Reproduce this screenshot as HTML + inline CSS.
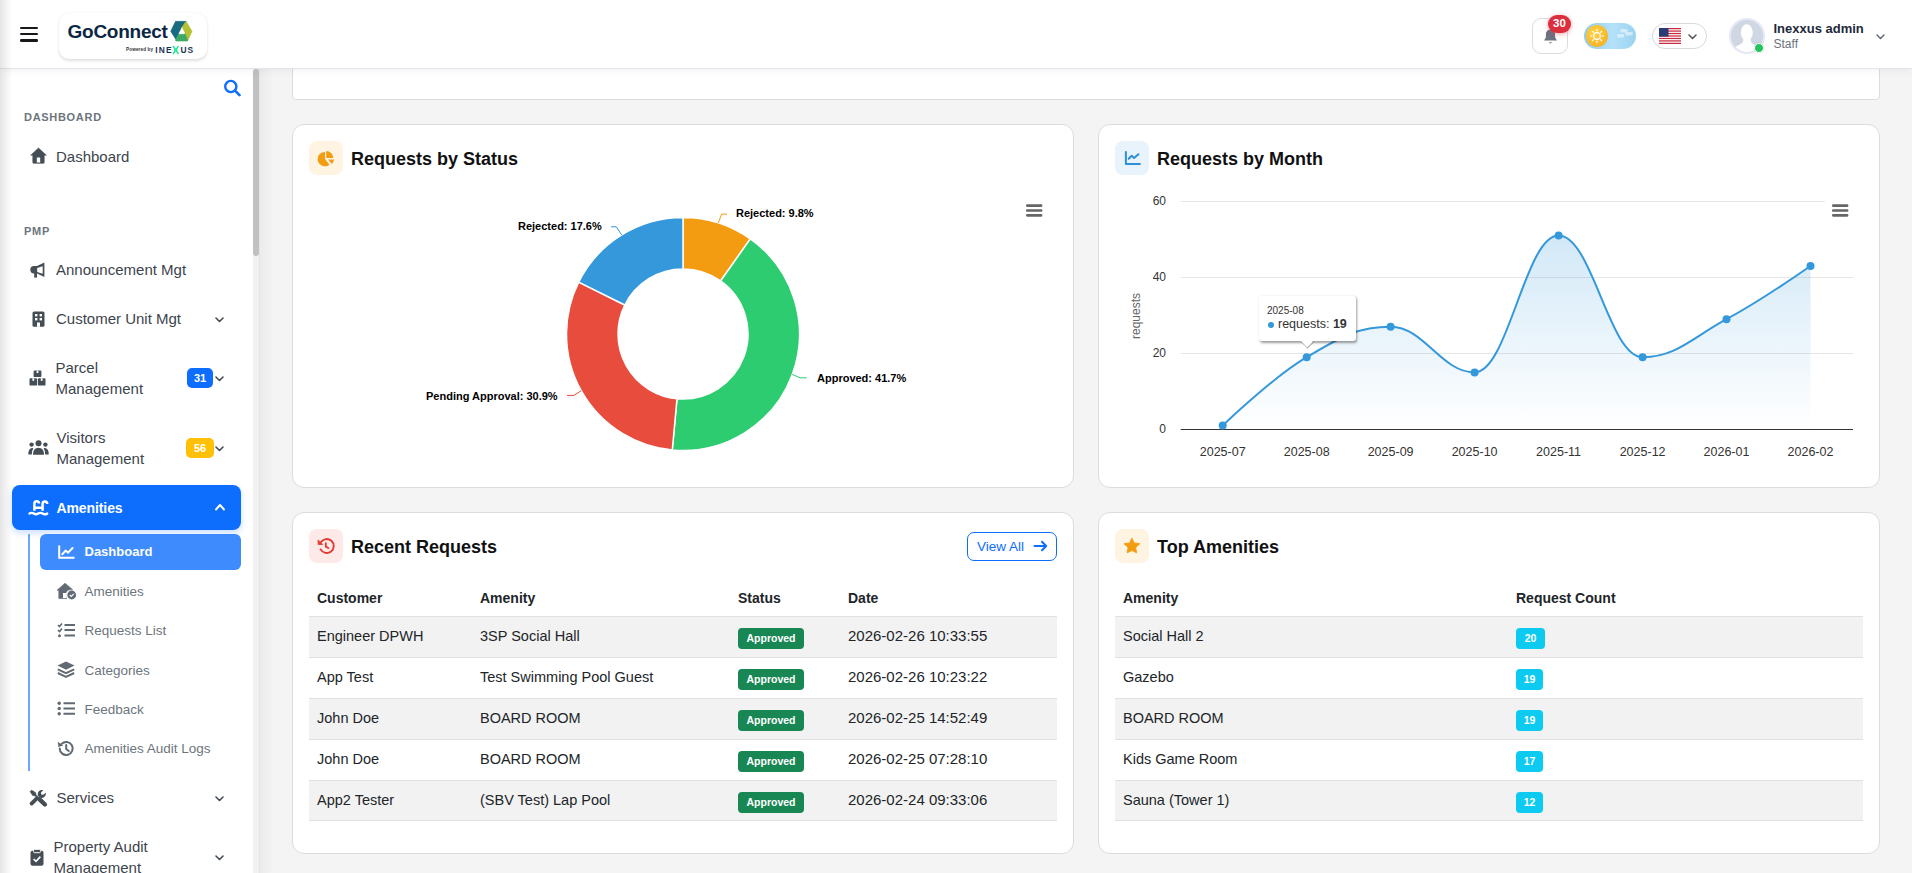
<!DOCTYPE html>
<html><head><meta charset="utf-8"><title>GoConnect - Amenities Dashboard</title>
<style>
html,body{margin:0;padding:0;width:1912px;height:873px;overflow:hidden;background:#f4f4f4}
body{font-family:"Liberation Sans", sans-serif;position:relative}
.t{position:absolute;white-space:nowrap}
.b{position:absolute}
</style></head><body>
<div class="b" style="left:260px;top:68px;width:1652px;height:805px;background:#f4f4f4"></div>
<div class="b" style="left:260px;top:68px;width:14px;height:805px;background:linear-gradient(90deg,rgba(0,0,0,0.035),rgba(0,0,0,0))"></div>
<div class="b" style="left:292px;top:40px;width:1588px;height:60px;background:#fff;border:1px solid #dcdcdc;box-sizing:border-box;border-radius:4px"></div>
<div class="b" style="left:292px;top:124px;width:782px;height:364px;background:#fff;border:1px solid #dcdcdc;box-sizing:border-box;border-radius:12px"></div>
<div class="b" style="left:1098px;top:124px;width:782px;height:364px;background:#fff;border:1px solid #dcdcdc;box-sizing:border-box;border-radius:12px"></div>
<div class="b" style="left:292px;top:512px;width:782px;height:342px;background:#fff;border:1px solid #dcdcdc;box-sizing:border-box;border-radius:12px"></div>
<div class="b" style="left:1098px;top:512px;width:782px;height:342px;background:#fff;border:1px solid #dcdcdc;box-sizing:border-box;border-radius:12px"></div>
<div class="b" style="left:309px;top:141px;width:34px;height:34px;background:#fff3e2;border-radius:8px"></div>

<div class="t" style="left:351px;top:149.76px;font-size:18px;line-height:18px;font-weight:700;color:#111;">Requests by Status</div>
<svg class="b" style="left:309px;top:141px" width="34" height="34" viewBox="0 0 34 34"><path d="M16 10.9 A7.2 7.2 0 1 0 20.4 23.7 L16 18.1 Z" fill="#f39c12"/><path d="M17.2 10.1 A7.1 7.1 0 0 1 24.3 16.9 L17.2 16.9 Z" fill="#f39c12"/><path d="M19.2 18.4 L25 18.4 A7.3 7.3 0 0 1 22.7 23.1 Z" fill="#f39c12"/></svg>
<div class="b" style="left:1115px;top:141px;width:34px;height:34px;background:#e8f3fc;border-radius:8px"></div>

<div class="t" style="left:1157px;top:149.76px;font-size:18px;line-height:18px;font-weight:700;color:#111;">Requests by Month</div>
<svg class="b" style="left:1115px;top:141px" width="34" height="34" viewBox="0 0 34 34"><path d="M10.9 10.9 V22.9 H24.9" fill="none" stroke="#2d8fd8" stroke-width="2" stroke-linecap="round" stroke-linejoin="round"/><path d="M13.7 17.8 L16.7 14.8 L19.1 17 L23.4 13.2" fill="none" stroke="#2d8fd8" stroke-width="2" stroke-linejoin="round" stroke-linecap="round"/></svg>
<div class="b" style="left:309px;top:529px;width:34px;height:34px;background:#fde9e8;border-radius:8px"></div>

<div class="t" style="left:351px;top:537.76px;font-size:18px;line-height:18px;font-weight:700;color:#111;">Recent Requests</div>
<svg class="b" style="left:309px;top:529px" width="34" height="34" viewBox="0 0 34 34"><path d="M11.6 20.4 A7 7 0 1 0 11.8 13.3" fill="none" stroke="#e03c31" stroke-width="1.9" stroke-linecap="round"/><path d="M9 10.9 L9.2 15.6 L13.8 15.4 Z" fill="#e03c31" stroke="#e03c31" stroke-width="0.8" stroke-linejoin="round"/><path d="M16.8 14.2 V17.6 L19.4 19" fill="none" stroke="#e03c31" stroke-width="1.8" stroke-linecap="round"/></svg>
<div class="b" style="left:1115px;top:529px;width:34px;height:34px;background:#fff3e2;border-radius:8px"></div>

<div class="t" style="left:1157px;top:537.76px;font-size:18px;line-height:18px;font-weight:700;color:#111;">Top Amenities</div>
<svg class="b" style="left:1115px;top:529px" width="34" height="34" viewBox="0 0 34 34"><path d="M16.9 9.1 L19.1 13.9 L24.8 14.7 L20.7 18.6 L21.6 23.8 L16.9 21.6 L12.2 23.8 L13.1 18.6 L9 14.7 L14.7 13.9 Z" fill="#f39c12" stroke="#f39c12" stroke-width="0.9" stroke-linejoin="round"/></svg>
<svg class="b" style="left:1025px;top:203px;" width="20" height="16" viewBox="0 0 20 16"><rect x="1" y="1.3" width="16.4" height="2.6" rx="1.1" fill="#666"/><rect x="1" y="6.2" width="16.4" height="2.6" rx="1.1" fill="#666"/><rect x="1" y="11.1" width="16.4" height="2.6" rx="1.1" fill="#666"/></svg>
<svg class="b" style="left:1831px;top:203px;" width="20" height="16" viewBox="0 0 20 16"><rect x="1" y="1.3" width="16.4" height="2.6" rx="1.1" fill="#666"/><rect x="1" y="6.2" width="16.4" height="2.6" rx="1.1" fill="#666"/><rect x="1" y="11.1" width="16.4" height="2.6" rx="1.1" fill="#666"/></svg>
<svg class="b" style="left:0px;top:0px;pointer-events:none" width="1912" height="873" viewBox="0 0 1912 873"><path d="M683.00 217.50 A116.5 116.5 0 0 1 750.31 238.91 L720.56 280.95 A65.0 65.0 0 0 0 683.00 269.00 Z" fill="#f39c12" stroke="#fff" stroke-width="1.5" stroke-linejoin="round"/><path d="M750.31 238.91 A116.5 116.5 0 0 1 672.25 450.00 L677.00 398.72 A65.0 65.0 0 0 0 720.56 280.95 Z" fill="#2ecc71" stroke="#fff" stroke-width="1.5" stroke-linejoin="round"/><path d="M672.25 450.00 A116.5 116.5 0 0 1 578.71 282.07 L624.81 305.03 A65.0 65.0 0 0 0 677.00 398.72 Z" fill="#e74c3c" stroke="#fff" stroke-width="1.5" stroke-linejoin="round"/><path d="M578.71 282.07 A116.5 116.5 0 0 1 683.00 217.50 L683.00 269.00 A65.0 65.0 0 0 0 624.81 305.03 Z" fill="#3498db" stroke="#fff" stroke-width="1.5" stroke-linejoin="round"/><path d="M718.3 223 L721.6 214.2 L727 214.2" fill="none" stroke="#f39c12" stroke-width="1"/><path d="M621.7 235 L616.3 226.8 L611 226.8" fill="none" stroke="#3498db" stroke-width="1"/><path d="M792.3 374.4 L800 377.8 L806.5 377.8" fill="none" stroke="#2ecc71" stroke-width="1"/><path d="M581.2 390.7 L574 395.4 L567 395.4" fill="none" stroke="#e74c3c" stroke-width="1"/></svg>
<div class="t" style="left:736px;top:207.69px;font-size:11px;line-height:11px;font-weight:700;color:#000;text-shadow:0 0 2px #fff,0 0 2px #fff;white-space:nowrap">Rejected: 9.8%</div>
<div class="t" style="left:518px;top:220.69px;font-size:11px;line-height:11px;font-weight:700;color:#000;text-shadow:0 0 2px #fff,0 0 2px #fff;white-space:nowrap">Rejected: 17.6%</div>
<div class="t" style="left:817px;top:372.69px;font-size:11px;line-height:11px;font-weight:700;color:#000;text-shadow:0 0 2px #fff,0 0 2px #fff;white-space:nowrap">Approved: 41.7%</div>
<div class="t" style="left:426px;top:390.69px;font-size:11px;line-height:11px;font-weight:700;color:#000;text-shadow:0 0 2px #fff,0 0 2px #fff;white-space:nowrap">Pending Approval: 30.9%</div>
<svg class="b" style="left:0px;top:0px;pointer-events:none" width="1912" height="873" viewBox="0 0 1912 873"><defs><linearGradient id="ag" x1="0" y1="0" x2="0" y2="1"><stop offset="0" stop-color="#3498db" stop-opacity="0.22"/><stop offset="1" stop-color="#3498db" stop-opacity="0"/></linearGradient></defs><path d="M1180.7 353.5 H1853" stroke="#e6e6e6" stroke-width="1"/><path d="M1180.7 277.5 H1853" stroke="#e6e6e6" stroke-width="1"/><path d="M1180.7 201.5 H1825" stroke="#e6e6e6" stroke-width="1"/><path d="M 1222.7 425.6 C 1222.7 425.6 1273.1 377.0 1306.7 357.2 C 1340.3 337.4 1357.0 326.8 1390.6 326.8 C 1424.2 326.8 1441.0 372.4 1474.6 372.4 C 1508.2 372.4 1525.0 235.6 1558.6 235.6 C 1592.2 235.6 1609.0 357.2 1642.6 357.2 C 1676.2 357.2 1692.9 337.4 1726.5 319.2 C 1760.1 301.0 1810.5 266.0 1810.5 266.0 L 1810.5 429.4 L 1222.7 429.4 Z" fill="url(#ag)"/><path d="M 1222.7 425.6 C 1222.7 425.6 1273.1 377.0 1306.7 357.2 C 1340.3 337.4 1357.0 326.8 1390.6 326.8 C 1424.2 326.8 1441.0 372.4 1474.6 372.4 C 1508.2 372.4 1525.0 235.6 1558.6 235.6 C 1592.2 235.6 1609.0 357.2 1642.6 357.2 C 1676.2 357.2 1692.9 337.4 1726.5 319.2 C 1760.1 301.0 1810.5 266.0 1810.5 266.0" fill="none" stroke="#3498db" stroke-width="2"/><path d="M1180.7 429.5 H1853" stroke="#333" stroke-width="1"/><circle cx="1222.7" cy="425.6" r="4" fill="#3498db"/><circle cx="1306.7" cy="357.2" r="4" fill="#3498db"/><circle cx="1390.6" cy="326.8" r="4" fill="#3498db"/><circle cx="1474.6" cy="372.4" r="4" fill="#3498db"/><circle cx="1558.6" cy="235.6" r="4" fill="#3498db"/><circle cx="1642.6" cy="357.2" r="4" fill="#3498db"/><circle cx="1726.5" cy="319.2" r="4" fill="#3498db"/><circle cx="1810.5" cy="266.0" r="4" fill="#3498db"/></svg>
<div class="t" style="left:1100px;width:66px;text-align:right;top:423.2px;font-size:12px;line-height:12px;color:#333">0</div>
<div class="t" style="left:1100px;width:66px;text-align:right;top:347.2px;font-size:12px;line-height:12px;color:#333">20</div>
<div class="t" style="left:1100px;width:66px;text-align:right;top:271.2px;font-size:12px;line-height:12px;color:#333">40</div>
<div class="t" style="left:1100px;width:66px;text-align:right;top:195.2px;font-size:12px;line-height:12px;color:#333">60</div>
<div class="t" style="left:1182.7px;width:80px;text-align:center;top:446.4px;font-size:12.5px;line-height:12.5px;color:#333">2025-07</div>
<div class="t" style="left:1266.7px;width:80px;text-align:center;top:446.4px;font-size:12.5px;line-height:12.5px;color:#333">2025-08</div>
<div class="t" style="left:1350.6px;width:80px;text-align:center;top:446.4px;font-size:12.5px;line-height:12.5px;color:#333">2025-09</div>
<div class="t" style="left:1434.6px;width:80px;text-align:center;top:446.4px;font-size:12.5px;line-height:12.5px;color:#333">2025-10</div>
<div class="t" style="left:1518.6px;width:80px;text-align:center;top:446.4px;font-size:12.5px;line-height:12.5px;color:#333">2025-11</div>
<div class="t" style="left:1602.6px;width:80px;text-align:center;top:446.4px;font-size:12.5px;line-height:12.5px;color:#333">2025-12</div>
<div class="t" style="left:1686.5px;width:80px;text-align:center;top:446.4px;font-size:12.5px;line-height:12.5px;color:#333">2026-01</div>
<div class="t" style="left:1770.5px;width:80px;text-align:center;top:446.4px;font-size:12.5px;line-height:12.5px;color:#333">2026-02</div>
<div class="t" style="left:1113px;top:310px;width:46px;font-size:12px;line-height:12px;color:#666;transform:rotate(-90deg);transform-origin:23px 6px;text-align:center">requests</div>
<div class="b" style="left:1259px;top:296px;width:97px;height:45px;background:#fff;border-radius:3px;box-shadow:1px 1.5px 2.5px rgba(0,0,0,0.38)"></div>
<svg class="b" style="left:1294px;top:338px;" width="26" height="14" viewBox="0 0 26 14"><path d="M6.5 2.5 L12.8 9 L19 2.5" fill="#fff" stroke="rgba(0,0,0,0.3)" stroke-width="1.2" transform="translate(0.8,1)"/><path d="M6.5 2.5 L12.8 9 L19 2.5 Z" fill="#fff"/><rect x="0" y="0" width="26" height="3" fill="#fff"/></svg>
<div class="t" style="left:1267px;top:306.04px;font-size:10px;line-height:10px;font-weight:400;color:#333;">2025-08</div>
<div class="b" style="left:1268px;top:321.5px;width:6px;height:6px;border-radius:3px;background:#3498db"></div>
<div class="t" style="left:1278px;top:318.42px;font-size:12.5px;line-height:12.5px;font-weight:400;color:#333;">requests: <b>19</b></div>
<div class="t" style="left:317px;top:591.15px;font-size:14px;line-height:14px;font-weight:700;color:#212529;">Customer</div>
<div class="t" style="left:480px;top:591.15px;font-size:14px;line-height:14px;font-weight:700;color:#212529;">Amenity</div>
<div class="t" style="left:738px;top:591.15px;font-size:14px;line-height:14px;font-weight:700;color:#212529;">Status</div>
<div class="t" style="left:848px;top:591.15px;font-size:14px;line-height:14px;font-weight:700;color:#212529;">Date</div>
<div class="b" style="left:309px;top:616px;width:748px;height:1px;background:#dee2e6"></div>
<div class="b" style="left:309px;top:617px;width:748px;height:40px;background:#f2f2f2"></div>
<div class="b" style="left:309px;top:657px;width:748px;height:1px;background:#dee2e6"></div>
<div class="t" style="left:317px;top:628.73px;font-size:14.5px;line-height:14.5px;font-weight:400;color:#212529;">Engineer DPWH</div>
<div class="t" style="left:480px;top:628.73px;font-size:14.5px;line-height:14.5px;font-weight:400;color:#212529;">3SP Social Hall</div>
<div class="b" style="left:738px;top:627.5px;width:66px;height:21px;background:#198754;border-radius:4px"></div>
<div class="t" style="left:738px;width:66px;text-align:center;top:632.71px;font-size:10.5px;line-height:10.5px;font-weight:700;color:#fff">Approved</div>
<div class="t" style="left:848px;top:628.30px;font-size:15px;line-height:15px;font-weight:400;color:#212529;">2026-02-26 10:33:55</div>
<div class="b" style="left:309px;top:698px;width:748px;height:1px;background:#dee2e6"></div>
<div class="t" style="left:317px;top:669.73px;font-size:14.5px;line-height:14.5px;font-weight:400;color:#212529;">App Test</div>
<div class="t" style="left:480px;top:669.73px;font-size:14.5px;line-height:14.5px;font-weight:400;color:#212529;">Test Swimming Pool Guest</div>
<div class="b" style="left:738px;top:668.5px;width:66px;height:21px;background:#198754;border-radius:4px"></div>
<div class="t" style="left:738px;width:66px;text-align:center;top:673.71px;font-size:10.5px;line-height:10.5px;font-weight:700;color:#fff">Approved</div>
<div class="t" style="left:848px;top:669.30px;font-size:15px;line-height:15px;font-weight:400;color:#212529;">2026-02-26 10:23:22</div>
<div class="b" style="left:309px;top:699px;width:748px;height:40px;background:#f2f2f2"></div>
<div class="b" style="left:309px;top:739px;width:748px;height:1px;background:#dee2e6"></div>
<div class="t" style="left:317px;top:710.73px;font-size:14.5px;line-height:14.5px;font-weight:400;color:#212529;">John Doe</div>
<div class="t" style="left:480px;top:710.73px;font-size:14.5px;line-height:14.5px;font-weight:400;color:#212529;">BOARD ROOM</div>
<div class="b" style="left:738px;top:709.5px;width:66px;height:21px;background:#198754;border-radius:4px"></div>
<div class="t" style="left:738px;width:66px;text-align:center;top:714.71px;font-size:10.5px;line-height:10.5px;font-weight:700;color:#fff">Approved</div>
<div class="t" style="left:848px;top:710.30px;font-size:15px;line-height:15px;font-weight:400;color:#212529;">2026-02-25 14:52:49</div>
<div class="b" style="left:309px;top:780px;width:748px;height:1px;background:#dee2e6"></div>
<div class="t" style="left:317px;top:751.73px;font-size:14.5px;line-height:14.5px;font-weight:400;color:#212529;">John Doe</div>
<div class="t" style="left:480px;top:751.73px;font-size:14.5px;line-height:14.5px;font-weight:400;color:#212529;">BOARD ROOM</div>
<div class="b" style="left:738px;top:750.5px;width:66px;height:21px;background:#198754;border-radius:4px"></div>
<div class="t" style="left:738px;width:66px;text-align:center;top:755.71px;font-size:10.5px;line-height:10.5px;font-weight:700;color:#fff">Approved</div>
<div class="t" style="left:848px;top:751.30px;font-size:15px;line-height:15px;font-weight:400;color:#212529;">2026-02-25 07:28:10</div>
<div class="b" style="left:309px;top:781px;width:748px;height:39px;background:#f2f2f2"></div>
<div class="b" style="left:309px;top:820px;width:748px;height:1px;background:#dee2e6"></div>
<div class="t" style="left:317px;top:792.73px;font-size:14.5px;line-height:14.5px;font-weight:400;color:#212529;">App2 Tester</div>
<div class="t" style="left:480px;top:792.73px;font-size:14.5px;line-height:14.5px;font-weight:400;color:#212529;">(SBV Test) Lap Pool</div>
<div class="b" style="left:738px;top:791.5px;width:66px;height:21px;background:#198754;border-radius:4px"></div>
<div class="t" style="left:738px;width:66px;text-align:center;top:796.71px;font-size:10.5px;line-height:10.5px;font-weight:700;color:#fff">Approved</div>
<div class="t" style="left:848px;top:792.30px;font-size:15px;line-height:15px;font-weight:400;color:#212529;">2026-02-24 09:33:06</div>
<div class="t" style="left:1123px;top:591.15px;font-size:14px;line-height:14px;font-weight:700;color:#212529;">Amenity</div>
<div class="t" style="left:1516px;top:591.15px;font-size:14px;line-height:14px;font-weight:700;color:#212529;">Request Count</div>
<div class="b" style="left:1115px;top:616px;width:748px;height:1px;background:#dee2e6"></div>
<div class="b" style="left:1115px;top:617px;width:748px;height:40px;background:#f2f2f2"></div>
<div class="b" style="left:1115px;top:657px;width:748px;height:1px;background:#dee2e6"></div>
<div class="t" style="left:1123px;top:628.73px;font-size:14.5px;line-height:14.5px;font-weight:400;color:#212529;">Social Hall 2</div>
<div class="b" style="left:1516px;top:627.5px;width:29px;height:21px;background:#0dcaf0;border-radius:4px"></div>
<div class="t" style="left:1516px;width:29px;text-align:center;top:632.71px;font-size:10.5px;line-height:10.5px;font-weight:700;color:#fff">20</div>
<div class="b" style="left:1115px;top:698px;width:748px;height:1px;background:#dee2e6"></div>
<div class="t" style="left:1123px;top:669.73px;font-size:14.5px;line-height:14.5px;font-weight:400;color:#212529;">Gazebo</div>
<div class="b" style="left:1516px;top:668.5px;width:27px;height:21px;background:#0dcaf0;border-radius:4px"></div>
<div class="t" style="left:1516px;width:27px;text-align:center;top:673.71px;font-size:10.5px;line-height:10.5px;font-weight:700;color:#fff">19</div>
<div class="b" style="left:1115px;top:699px;width:748px;height:40px;background:#f2f2f2"></div>
<div class="b" style="left:1115px;top:739px;width:748px;height:1px;background:#dee2e6"></div>
<div class="t" style="left:1123px;top:710.73px;font-size:14.5px;line-height:14.5px;font-weight:400;color:#212529;">BOARD ROOM</div>
<div class="b" style="left:1516px;top:709.5px;width:27px;height:21px;background:#0dcaf0;border-radius:4px"></div>
<div class="t" style="left:1516px;width:27px;text-align:center;top:714.71px;font-size:10.5px;line-height:10.5px;font-weight:700;color:#fff">19</div>
<div class="b" style="left:1115px;top:780px;width:748px;height:1px;background:#dee2e6"></div>
<div class="t" style="left:1123px;top:751.73px;font-size:14.5px;line-height:14.5px;font-weight:400;color:#212529;">Kids Game Room</div>
<div class="b" style="left:1516px;top:750.5px;width:27px;height:21px;background:#0dcaf0;border-radius:4px"></div>
<div class="t" style="left:1516px;width:27px;text-align:center;top:755.71px;font-size:10.5px;line-height:10.5px;font-weight:700;color:#fff">17</div>
<div class="b" style="left:1115px;top:781px;width:748px;height:39px;background:#f2f2f2"></div>
<div class="b" style="left:1115px;top:820px;width:748px;height:1px;background:#dee2e6"></div>
<div class="t" style="left:1123px;top:792.73px;font-size:14.5px;line-height:14.5px;font-weight:400;color:#212529;">Sauna (Tower 1)</div>
<div class="b" style="left:1516px;top:791.5px;width:27px;height:21px;background:#0dcaf0;border-radius:4px"></div>
<div class="t" style="left:1516px;width:27px;text-align:center;top:796.71px;font-size:10.5px;line-height:10.5px;font-weight:700;color:#fff">12</div>
<div class="b" style="left:967px;top:532px;width:90px;height:29px;border:1px solid #0d6efd;border-radius:7px;box-sizing:border-box"></div>
<div class="t" style="left:977px;top:539.57px;font-size:13.5px;line-height:13.5px;font-weight:400;color:#0d6efd;">View All</div>
<svg class="b" style="left:1033px;top:540px;" width="15" height="12" viewBox="0 0 15 12"><path d="M1.5 6 H13 M9 1.8 L13.2 6 L9 10.2" fill="none" stroke="#0d6efd" stroke-width="2" stroke-linecap="round" stroke-linejoin="round"/></svg>
<div class="b" style="left:0px;top:68px;width:260px;height:805px;background:#fff;border-right:1px solid #e1e5ea;box-sizing:border-box"></div>
<div class="b" style="left:253px;top:68px;width:6px;height:805px;background:#f1f1f1"></div>
<div class="b" style="left:253px;top:69px;width:6px;height:187px;background:#c1c1c1;border-radius:3px"></div>
<svg class="b" style="left:223px;top:79px;" width="19" height="18" viewBox="0 0 19 18"><circle cx="7.8" cy="7.5" r="5.6" fill="none" stroke="#0d6efd" stroke-width="2.4"/><path d="M12 11.7 L16.5 16.2" stroke="#0d6efd" stroke-width="2.6" stroke-linecap="round"/></svg>
<div class="t" style="left:24px;top:111.69px;font-size:11px;line-height:11px;font-weight:700;color:#6c757d;letter-spacing:0.7px;">DASHBOARD</div>
<div class="t" style="left:24px;top:225.69px;font-size:11px;line-height:11px;font-weight:700;color:#6c757d;letter-spacing:0.7px;">PMP</div>
<svg class="b" style="left:30px;top:147px;" width="17" height="17" viewBox="0 0 17 17"><path d="M8.5 1 L16.3 8.2 L14.2 8.2 L14.2 15.5 Q14.2 16.3 13.4 16.3 L3.6 16.3 Q2.8 16.3 2.8 15.5 L2.8 8.2 L0.7 8.2 Z" fill="#454d55" stroke="#454d55" stroke-width="0.6" stroke-linejoin="round"/><rect x="6.8" y="10.5" width="3.4" height="5" fill="#fff"/></svg>
<div class="t" style="left:56px;top:149.30px;font-size:15px;line-height:15px;font-weight:400;color:#3d444c;">Dashboard</div>
<svg class="b" style="left:26px;top:258px;" width="24" height="24" viewBox="0 0 24 24"><path d="M18.4 4.4 V19 L11 15.4 H8 A3.7 3.7 0 0 1 8 8 H11 Z" fill="#454d55"/><path d="M11.2 10 L16.7 8.3 V15.7 L11.2 14 Z" fill="#fff"/><rect x="8.2" y="14.8" width="2.8" height="4.8" fill="#454d55"/></svg>
<div class="t" style="left:56px;top:262.30px;font-size:15px;line-height:15px;font-weight:400;color:#3d444c;">Announcement Mgt</div>
<svg class="b" style="left:32px;top:311px;" width="13" height="16" viewBox="0 0 13 16"><rect x="0.5" y="0.5" width="12" height="15.3" rx="1.6" fill="#454d55"/><rect x="3" y="3" width="2.4" height="2.4" fill="#fff"/><rect x="7.6" y="3" width="2.4" height="2.4" fill="#fff"/><rect x="3" y="7" width="2.4" height="2.4" fill="#fff"/><rect x="7.6" y="7" width="2.4" height="2.4" fill="#fff"/><rect x="5" y="11.5" width="3" height="4.3" fill="#fff"/></svg>
<div class="t" style="left:56px;top:310.90px;font-size:15px;line-height:15px;font-weight:400;color:#3d444c;">Customer Unit Mgt</div>
<svg class="b" style="left:215px;top:317px;" width="9" height="6" viewBox="0 0 9 6"><path d="M1 1 L4.5 4.5 L8 1" fill="none" stroke="#454d55" stroke-width="1.6" stroke-linecap="round" stroke-linejoin="round"/></svg>
<svg class="b" style="left:29px;top:370px;" width="17" height="16" viewBox="0 0 17 16"><rect x="4.6" y="0.5" width="7.8" height="6.6" rx="1.2" fill="#454d55"/><rect x="0.5" y="8.2" width="7.6" height="7.4" rx="1.2" fill="#454d55"/><rect x="8.9" y="8.2" width="7.6" height="7.4" rx="1.2" fill="#454d55"/><rect x="7.6" y="0.5" width="1.8" height="2.6" fill="#fff"/><rect x="3.4" y="8.2" width="1.8" height="2.6" fill="#fff"/><rect x="11.8" y="8.2" width="1.8" height="2.6" fill="#fff"/></svg>
<div class="t" style="left:55.5px;top:360.30px;font-size:15px;line-height:15px;font-weight:400;color:#3d444c;">Parcel</div>
<div class="t" style="left:55.5px;top:381.30px;font-size:15px;line-height:15px;font-weight:400;color:#3d444c;">Management</div>
<div class="b" style="left:187px;top:368px;width:26px;height:20px;background:#0d6efd;border-radius:5px"></div>
<div class="t" style="left:187px;width:26px;text-align:center;top:372.69px;font-size:11px;line-height:11px;font-weight:700;color:#fff">31</div>
<svg class="b" style="left:215px;top:376px;" width="9" height="6" viewBox="0 0 9 6"><path d="M1 1 L4.5 4.5 L8 1" fill="none" stroke="#454d55" stroke-width="1.6" stroke-linecap="round" stroke-linejoin="round"/></svg>
<svg class="b" style="left:28px;top:440px;" width="21" height="15" viewBox="0 0 21 15"><circle cx="10.5" cy="3.2" r="3" fill="#454d55"/><circle cx="3.6" cy="4.6" r="2.2" fill="#454d55"/><circle cx="17.4" cy="4.6" r="2.2" fill="#454d55"/><path d="M5 14.8 Q5 8 10.5 7.8 Q16 8 16 14.8 Z" fill="#454d55"/><path d="M0.3 14.5 Q0.3 8.2 4.2 8 Q5.2 8.2 5.4 8.6 Q3.8 10.5 3.8 14.5 Z" fill="#454d55"/><path d="M20.7 14.5 Q20.7 8.2 16.8 8 Q15.8 8.2 15.6 8.6 Q17.2 10.5 17.2 14.5 Z" fill="#454d55"/></svg>
<div class="t" style="left:56.5px;top:430.30px;font-size:15px;line-height:15px;font-weight:400;color:#3d444c;">Visitors</div>
<div class="t" style="left:56.5px;top:451.30px;font-size:15px;line-height:15px;font-weight:400;color:#3d444c;">Management</div>
<div class="b" style="left:186px;top:438px;width:28px;height:20px;background:#ffc107;border-radius:5px"></div>
<div class="t" style="left:186px;width:28px;text-align:center;top:442.69px;font-size:11px;line-height:11px;font-weight:700;color:#fff">56</div>
<svg class="b" style="left:215px;top:446px;" width="9" height="6" viewBox="0 0 9 6"><path d="M1 1 L4.5 4.5 L8 1" fill="none" stroke="#454d55" stroke-width="1.6" stroke-linecap="round" stroke-linejoin="round"/></svg>
<div class="b" style="left:12px;top:485px;width:229px;height:45px;background:#0d6efd;border-radius:8px;box-shadow:0 3px 6px rgba(13,110,253,0.22)"></div>
<svg class="b" style="left:24px;top:495px;" width="30" height="25" viewBox="0 0 30 25"><path d="M10.4 15.8 V8.6 A2.3 2.3 0 0 1 15 8.6 M18.6 15.8 V8.9 A2.3 2.3 0 0 1 23.2 8.9 M10.4 12.8 H18.6" fill="none" stroke="#fff" stroke-width="2.5"/><path d="M5.5 18.6 Q7.6 17.2 9.8 18.6 Q12 20 14.2 18.6 Q16.4 17.2 18.6 18.6 Q20.8 20 23.2 18.6" fill="none" stroke="#fff" stroke-width="2.4" stroke-linecap="round"/></svg>
<div class="t" style="left:56.5px;top:501.15px;font-size:14px;line-height:14px;font-weight:700;color:#fff;letter-spacing:-0.1px;">Amenities</div>
<svg class="b" style="left:215px;top:504px;" width="10" height="7" viewBox="0 0 10 7"><path d="M1 5.5 L5.0 1 L9 5.5" fill="none" stroke="#fff" stroke-width="1.9" stroke-linecap="round" stroke-linejoin="round"/></svg>
<div class="b" style="left:28px;top:534px;width:2px;height:237px;background:#6ea8fe"></div>
<div class="b" style="left:40px;top:534px;width:201px;height:36px;background:#3d8bfd;border-radius:6px"></div>
<svg class="b" style="left:58px;top:545px;" width="17" height="14" viewBox="0 0 17 14"><path d="M1.2 0.5 V12.8 H16.5" fill="none" stroke="#fff" stroke-width="2"/><path d="M4.3 9.2 L7.6 5.6 L10 7.8 L14.6 3" fill="none" stroke="#fff" stroke-width="2" stroke-linejoin="round" stroke-linecap="round"/></svg>
<div class="t" style="left:84.5px;top:545.00px;font-size:13px;line-height:13px;font-weight:700;color:#fff;">Dashboard</div>
<div class="t" style="left:84.5px;top:584.87px;font-size:13.5px;line-height:13.5px;font-weight:400;color:#6c757d;">Amenities</div>
<div class="t" style="left:84.5px;top:623.77px;font-size:13.5px;line-height:13.5px;font-weight:400;color:#6c757d;">Requests List</div>
<div class="t" style="left:84.5px;top:663.57px;font-size:13.5px;line-height:13.5px;font-weight:400;color:#6c757d;">Categories</div>
<div class="t" style="left:84.5px;top:702.57px;font-size:13.5px;line-height:13.5px;font-weight:400;color:#6c757d;">Feedback</div>
<div class="t" style="left:84.5px;top:742.17px;font-size:13.5px;line-height:13.5px;font-weight:400;color:#6c757d;">Amenities Audit Logs</div>
<svg class="b" style="left:52px;top:578px;" width="30" height="30" viewBox="0 0 30 30"><path d="M13 5.2 L20.5 11.5 L19 11.5 A5.6 5.6 0 0 0 14.6 20.6 L6.8 20.6 L6.8 12.3 L5 12.3 Z" fill="#616a73" stroke="#616a73" stroke-width="0.6" stroke-linejoin="round"/><rect x="11" y="15" width="3" height="5" fill="#fff"/><circle cx="19.7" cy="17" r="4.4" fill="#616a73"/><path d="M17.8 17 L19.3 18.4 L21.8 15.8" fill="none" stroke="#fff" stroke-width="1.1"/></svg>
<svg class="b" style="left:57px;top:622px;" width="19" height="16" viewBox="0 0 19 16"><path d="M1 3 L2.5 4.5 L5 1.5 M1 8 L2.5 9.5 L5 6.5" fill="none" stroke="#616a73" stroke-width="1.6"/><circle cx="2.5" cy="13.8" r="1.5" fill="#616a73"/><path d="M7.5 3 H18 M7.5 8 H18 M7.5 13.5 H18" stroke="#616a73" stroke-width="2"/></svg>
<svg class="b" style="left:57px;top:661px;" width="18" height="17" viewBox="0 0 18 17"><path d="M9 0.5 L17.5 4.6 L9 8.7 L0.5 4.6 Z" fill="#616a73"/><path d="M0.8 8.3 L9 12.2 L17.2 8.3" fill="none" stroke="#616a73" stroke-width="2" stroke-linejoin="round"/><path d="M0.8 12 L9 15.9 L17.2 12" fill="none" stroke="#616a73" stroke-width="2" stroke-linejoin="round"/></svg>
<svg class="b" style="left:57px;top:701px;" width="19" height="15" viewBox="0 0 19 15"><circle cx="2.2" cy="2.2" r="1.7" fill="#616a73"/><circle cx="2.2" cy="7.5" r="1.7" fill="#616a73"/><circle cx="2.2" cy="12.8" r="1.7" fill="#616a73"/><path d="M6.5 2.2 H18 M6.5 7.5 H18 M6.5 12.8 H18" stroke="#616a73" stroke-width="2"/></svg>
<svg class="b" style="left:57px;top:740px;" width="18" height="17" viewBox="0 0 18 17"><path d="M2.7 8.5 A6.5 6.5 0 1 0 4.6 3.9" fill="none" stroke="#616a73" stroke-width="2" stroke-linecap="round"/><path d="M0.8 1.8 L1.4 6.9 L6.3 5.5 Z" fill="#616a73"/><path d="M9.2 5 V9 L11.8 11" fill="none" stroke="#616a73" stroke-width="2" stroke-linecap="round"/></svg>
<svg class="b" style="left:26px;top:786px;" width="24" height="24" viewBox="0 0 24 24"><path d="M13.6 13.4 L18.9 18.5" stroke="#454d55" stroke-width="4.4" stroke-linecap="round"/><path d="M8.6 8.4 L13.2 13" stroke="#454d55" stroke-width="1.8"/><path d="M4.2 5.6 L5.6 4.2 L9.6 6.8 L9.8 9.6 L6.8 9.6 Z" fill="#454d55" stroke="#454d55" stroke-width="0.8" stroke-linejoin="round"/><path d="M5.6 17.6 L10.6 12.6" stroke="#454d55" stroke-width="3.8" stroke-linecap="round"/><path d="M17.2 4.2 A4.4 4.4 0 0 0 11.8 9.8 L13.8 11.6 A4.4 4.4 0 0 0 19.8 6.6 L17.4 8.8 L15.2 8.6 L15 6.4 Z" fill="#454d55"/></svg>
<div class="t" style="left:56.5px;top:790.30px;font-size:15px;line-height:15px;font-weight:400;color:#3d444c;">Services</div>
<svg class="b" style="left:215px;top:796px;" width="9" height="6" viewBox="0 0 9 6"><path d="M1 1 L4.5 4.5 L8 1" fill="none" stroke="#454d55" stroke-width="1.6" stroke-linecap="round" stroke-linejoin="round"/></svg>
<svg class="b" style="left:30px;top:849px;" width="14" height="17" viewBox="0 0 14 17"><rect x="0.5" y="1.8" width="13" height="15" rx="2" fill="#454d55"/><rect x="3.6" y="0.3" width="6.8" height="3.4" rx="1" fill="#454d55" stroke="#fff" stroke-width="1"/><path d="M3.6 10 L6 12.4 L10.4 7.6" fill="none" stroke="#fff" stroke-width="1.6"/></svg>
<div class="t" style="left:53.5px;top:839.30px;font-size:15px;line-height:15px;font-weight:400;color:#3d444c;">Property Audit</div>
<div class="t" style="left:53.5px;top:860.30px;font-size:15px;line-height:15px;font-weight:400;color:#3d444c;">Management</div>
<svg class="b" style="left:215px;top:855px;" width="9" height="6" viewBox="0 0 9 6"><path d="M1 1 L4.5 4.5 L8 1" fill="none" stroke="#454d55" stroke-width="1.6" stroke-linecap="round" stroke-linejoin="round"/></svg>
<div class="b" style="left:0px;top:0px;width:1912px;height:69px;background:#fff;border-bottom:1px solid #e0e5eb;box-sizing:border-box;box-shadow:0 2px 8px rgba(0,0,0,0.05)"></div>
<div class="b" style="left:20px;top:27px;width:18px;height:2.3px;background:#16181b;border-radius:1.2px"></div>
<div class="b" style="left:20px;top:33.2px;width:18px;height:2.3px;background:#16181b;border-radius:1.2px"></div>
<div class="b" style="left:20px;top:39.3px;width:18px;height:2.3px;background:#16181b;border-radius:1.2px"></div>
<div class="b" style="left:59px;top:13px;width:148px;height:46px;background:#fff;border-radius:10px;box-shadow:0 1.5px 3px rgba(0,0,0,0.12),0 0 1px rgba(0,0,0,0.06)"></div>
<div class="t" style="left:67.5px;top:21.92px;font-size:19px;line-height:19px;font-weight:700;color:#0a2743;letter-spacing:-0.25px;">GoConnect</div>
<svg class="b" style="left:168px;top:19px;" width="26" height="25" viewBox="0 0 26 25"><g transform="translate(-168,-19)" stroke-linejoin="round" stroke-width="0.8"><path d="M175.6 21.4 L186.1 21.4 L178.2 34.4 L176 39.4 L170.8 31.3 Z" fill="#176a80" stroke="#176a80"/><path d="M186.1 21.4 L191.9 31.3 L187.6 40.9 L181.6 27.8 Z" fill="#b5c034" stroke="#b5c034"/><path d="M178.6 34.2 L185.2 34.2 L187.6 40.9 L175.8 40.9 L176 39.4 Z" fill="#3ea866" stroke="#3ea866"/><path d="M181.9 27.6 L185 33.6 L178.8 33.6 Z" fill="#fff" stroke="#fff" stroke-width="0.3"/></g></svg>
<div class="t" style="left:126px;top:47.71px;font-size:4.6px;line-height:4.6px;font-weight:700;color:#333;letter-spacing:0.15px;">Powered by</div>
<div class="t" style="left:155.3px;top:45.89px;font-size:8.4px;line-height:8.4px;font-weight:700;color:#1a3550;">I</div>
<div class="t" style="left:158.8px;top:45.89px;font-size:8.4px;line-height:8.4px;font-weight:700;color:#1a3550;">N</div>
<div class="t" style="left:166px;top:45.89px;font-size:8.4px;line-height:8.4px;font-weight:700;color:#1a3550;">E</div>
<div class="t" style="left:180.6px;top:45.89px;font-size:8.4px;line-height:8.4px;font-weight:700;color:#1a3550;">U</div>
<div class="t" style="left:187.6px;top:45.89px;font-size:8.4px;line-height:8.4px;font-weight:700;color:#1a3550;">S</div>
<svg class="b" style="left:171px;top:45px;" width="9" height="10" viewBox="0 0 9 10"><path d="M2 1 L7.5 9 M7.5 1 L2 9 M3 5 H6.5" stroke="#2ee59d" stroke-width="1.5"/></svg>
<div class="b" style="left:1532px;top:18px;width:36px;height:36px;border:1px solid #dcdcdc;border-radius:9px;box-sizing:border-box"></div>
<svg class="b" style="left:1543px;top:28px;" width="15" height="17" viewBox="0 0 15 17"><path d="M7.5 1.5 A4.6 4.6 0 0 0 2.9 6.1 V9.6 L1 12.6 H14 L12.1 9.6 V6.1 A4.6 4.6 0 0 0 7.5 1.5 Z" fill="#6b7280"/><path d="M5.6 14.2 H9.4 L7.5 15.6 Z" fill="#6b7280"/></svg>
<div class="b" style="left:1548px;top:15px;width:23px;height:18px;background:#dc2f3e;border-radius:9px;box-shadow:0 1px 5px rgba(220,53,69,0.45)"></div>
<div class="t" style="left:1548px;width:23px;text-align:center;top:18.27px;font-size:11.5px;line-height:11.5px;font-weight:700;color:#fff">30</div>
<div class="b" style="left:1584px;top:23px;width:52px;height:26px;background:linear-gradient(90deg,#8fcbec,#b5e2fb 55%,#9ad2ef);border-radius:13px"></div>
<div class="b" style="left:1586px;top:25px;width:22px;height:22px;background:radial-gradient(circle at 40% 35%,#fdd34a,#f4a91a);border-radius:11px"></div>
<svg class="b" style="left:1586px;top:25px;" width="22" height="22" viewBox="0 0 22 22"><circle cx="11" cy="11" r="3.3" fill="none" stroke="#fff" stroke-width="1.2"/><path d="M16.20 11.00 L17.40 11.00" stroke="#fff" stroke-width="1.2" stroke-linecap="round"/><path d="M14.68 14.68 L15.53 15.53" stroke="#fff" stroke-width="1.2" stroke-linecap="round"/><path d="M11.00 16.20 L11.00 17.40" stroke="#fff" stroke-width="1.2" stroke-linecap="round"/><path d="M7.32 14.68 L6.47 15.53" stroke="#fff" stroke-width="1.2" stroke-linecap="round"/><path d="M5.80 11.00 L4.60 11.00" stroke="#fff" stroke-width="1.2" stroke-linecap="round"/><path d="M7.32 7.32 L6.47 6.47" stroke="#fff" stroke-width="1.2" stroke-linecap="round"/><path d="M11.00 5.80 L11.00 4.60" stroke="#fff" stroke-width="1.2" stroke-linecap="round"/><path d="M14.68 7.32 L15.53 6.47" stroke="#fff" stroke-width="1.2" stroke-linecap="round"/></svg>
<svg class="b" style="left:1614px;top:27px;" width="22" height="12" viewBox="0 0 22 12"><rect x="6.4" y="2" width="7.4" height="3.4" rx="1.7" fill="#fff" opacity="0.5"/><rect x="11" y="5" width="8" height="3.4" rx="1.7" fill="#fff" opacity="0.5"/><rect x="3" y="7" width="7.4" height="3.4" rx="1.7" fill="#fff" opacity="0.5"/></svg>
<div class="b" style="left:1652px;top:23px;width:55px;height:26px;border:1px solid #d9d9d9;border-radius:13px;box-sizing:border-box"></div>
<svg class="b" style="left:1659px;top:28px;" width="22" height="16" viewBox="0 0 22 16"><rect width="22" height="16" fill="#fff"/><rect y="0.00" width="22" height="1.23" fill="#c8283c"/><rect y="2.46" width="22" height="1.23" fill="#c8283c"/><rect y="4.92" width="22" height="1.23" fill="#c8283c"/><rect y="7.38" width="22" height="1.23" fill="#c8283c"/><rect y="9.85" width="22" height="1.23" fill="#c8283c"/><rect y="12.31" width="22" height="1.23" fill="#c8283c"/><rect y="14.77" width="22" height="1.23" fill="#c8283c"/><rect width="9.5" height="8.6" fill="#2c3a78"/></svg>
<svg class="b" style="left:1688px;top:34px;" width="9" height="6" viewBox="0 0 9 6"><path d="M1 1 L4.5 4.5 L8 1" fill="none" stroke="#555" stroke-width="1.5" stroke-linecap="round" stroke-linejoin="round"/></svg>
<div class="b" style="left:1729px;top:18px;width:36px;height:36px;background:#e6e6f8;border-radius:18px"></div>
<div class="b" style="left:1731px;top:20px;width:32px;height:32px;background:#cfd7e2;border-radius:16px;overflow:hidden"></div>
<div class="b" style="left:1731px;top:20px;width:32px;height:32px;border-radius:16px;overflow:hidden"><svg width="32" height="32" viewBox="0 0 32 32"><ellipse cx="15.8" cy="12.5" rx="6" ry="8.2" fill="#fff"/><path d="M2 34 Q3 26 9 24.5 Q12 23.5 12.5 19 L19.5 19 Q20 23.5 23 24.5 Q29 26 30 34 Z" fill="#fff"/></svg></div>
<div class="b" style="left:1753.5px;top:43px;width:8px;height:8px;background:#22c55e;border:1.5px solid #fff;border-radius:6px;box-shadow:0 0 2px rgba(0,0,0,0.15)"></div>
<div class="t" style="left:1773.5px;top:22.00px;font-size:13px;line-height:13px;font-weight:700;color:#1e293b;">Inexxus admin</div>
<div class="t" style="left:1773.5px;top:37.84px;font-size:12px;line-height:12px;font-weight:400;color:#6b7280;">Staff</div>
<svg class="b" style="left:1876px;top:34px;" width="9" height="6" viewBox="0 0 9 6"><path d="M1 1 L4.5 4.5 L8 1" fill="none" stroke="#5b6470" stroke-width="1.4" stroke-linecap="round" stroke-linejoin="round"/></svg>
<div class="b" style="left:0px;top:0px;width:12px;height:873px;background:linear-gradient(90deg,rgba(0,0,0,0.10),rgba(0,0,0,0))"></div>
</body></html>
